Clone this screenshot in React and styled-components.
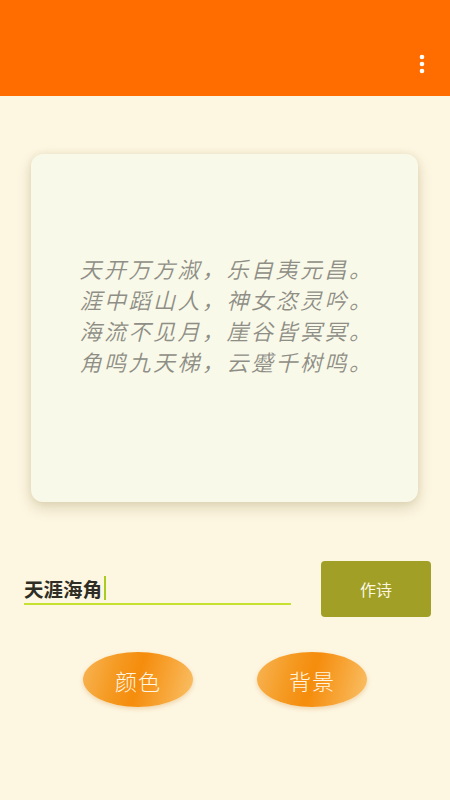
import React from "react";
import styled, { createGlobalStyle } from "styled-components";

const GlobalStyle = createGlobalStyle`
  html, body {
    margin: 0;
    padding: 0;
    background: #fdf6e1;
    font-family: "Noto Sans", "Noto Sans CJK SC", sans-serif;
  }
`;

const Page = styled.div`
  width: 450px;
  min-height: 800px;
  background: #fdf6e1;
  display: flex;
  flex-direction: column;
`;

const AppBar = styled.header`
  height: 96px;
  box-sizing: border-box;
  padding-top: 32px;
  background: #ff6d00;
  display: flex;
  flex-direction: column;
`;

const Toolbar = styled.div`
  height: 64px;
  display: flex;
  align-items: center;
  justify-content: flex-end;
  padding-right: 16px;
`;

const MenuButton = styled.button`
  width: 24px;
  height: 24px;
  padding: 0;
  border: none;
  background: none;
  display: flex;
  align-items: center;
  justify-content: center;
`;

const Card = styled.div`
  margin: 58px 32px 0 31px;
  height: 348px;
  background: #f9f9e9;
  border-radius: 12px;
  box-shadow: 0 6px 14px rgba(120, 100, 40, 0.22), 0 0 6px rgba(120, 100, 40, 0.1);
  display: flex;
  flex-direction: column;
  align-items: center;
  justify-content: center;
  padding-bottom: 26px;
  box-sizing: border-box;
`;

const Poem = styled.div`
  font-family: "Noto Sans CJK SC", sans-serif;
  font-style: italic;
  font-weight: 350;
  font-size: 22px;
  letter-spacing: 2.5px;
  line-height: 31px;
  padding-left: 4px;
  color: #8e8e86;
  text-align: center;
`;

const InputRow = styled.div`
  margin-top: 59px;
  padding: 0 19px 0 24px;
  display: flex;
  align-items: center;
  gap: 30px;
`;

const Field = styled.div`
  flex: 1;
  height: 32px;
  box-sizing: border-box;
  border-bottom: 2px solid #c6e12f;
  display: flex;
  align-items: center;
  font-family: "Noto Sans CJK SC", sans-serif;
  font-weight: bold;
  font-size: 19.5px;
  color: #2e2e26;
`;

const Cursor = styled.span`
  display: inline-block;
  width: 2px;
  height: 24px;
  margin-left: 2px;
  background: #a8cc20;
`;

const PoemButton = styled.button`
  width: 110px;
  height: 56px;
  border: none;
  border-radius: 4px;
  background: #a19f25;
  color: #fbf8e2;
  font-family: "Noto Sans CJK SC", sans-serif;
  font-size: 16px;
`;

const OvalRow = styled.div`
  margin-top: 35px;
  display: flex;
  justify-content: center;
  gap: 64px;
`;

const Oval = styled.button`
  width: 110px;
  height: 55px;
  border: none;
  border-radius: 50%;
  background: linear-gradient(
    105deg,
    #f8b555 0%,
    #f59a22 30%,
    #f58c0c 50%,
    #f8a93e 78%,
    #f9c26a 100%
  );
  box-shadow: 0 2px 4px rgba(200, 120, 20, 0.25);
  color: #fff7e4;
  font-family: "Noto Sans CJK SC", sans-serif;
  font-weight: 300;
  font-size: 22px;
  letter-spacing: 1px;
`;

const MoreIcon = () => (
  <svg width="6" height="20" viewBox="0 0 6 20">
    <circle cx="3" cy="3" r="2.3" fill="#fff" />
    <circle cx="3" cy="10" r="2.3" fill="#fff" />
    <circle cx="3" cy="17" r="2.3" fill="#fff" />
  </svg>
);

const lines = [
  "天开万方淑，乐自夷元昌。",
  "涯中蹈山人，神女恣灵吟。",
  "海流不见月，崖谷皆冥冥。",
  "角鸣九天梯，云蹙千树鸣。",
];

export default function App() {
  return (
    <Page>
      <GlobalStyle />
      <AppBar>
        <Toolbar>
          <MenuButton>
            <MoreIcon />
          </MenuButton>
        </Toolbar>
      </AppBar>

      <Card>
        <Poem>
          {lines.map((l) => (
            <div key={l}>{l}</div>
          ))}
        </Poem>
      </Card>

      <InputRow>
        <Field>
          天涯海角
          <Cursor />
        </Field>
        <PoemButton>作诗</PoemButton>
      </InputRow>

      <OvalRow>
        <Oval>颜色</Oval>
        <Oval>背景</Oval>
      </OvalRow>
    </Page>
  );
}
